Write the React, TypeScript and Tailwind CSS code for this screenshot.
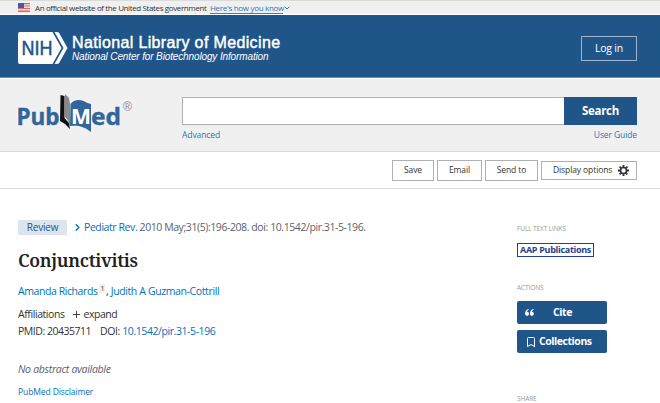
import { Bookmark, ChevronDown, ChevronRight, Plus } from "lucide-react";

function GovBanner() {
  return (
    <div className="flex h-[14px] items-center border-t border-[#dcdcdc] bg-[#f0f0f0] pl-[18px] text-[8px] tracking-[-0.38px]">
      <svg viewBox="0 0 12 9" className="h-[9px] w-3">
        <path fill="#f5e4e4" d="M0 0h12v9H0z" />
        <path fill="#e06666" d="M0 0h12v1.2H0zM0 2.4h12v1.2H0zM0 4.9h12v1.2H0zM0 7.4h12v1.6H0z" />
        <path fill="#4558a5" d="M0 0h6v5H0z" />
      </svg>
      <span className="ml-[5px] w-[172px] whitespace-nowrap">An official website of the United States government</span>
      <a className="ml-[3px] mt-px flex h-[11px] w-[73px] items-center whitespace-nowrap border-b border-[#3583bd] tracking-[-0.3px] text-[#2378bb]">
        Here's how you know
      </a>
      <ChevronDown className="size-[8px] text-[#2378bb]" strokeWidth={3} />
    </div>
  );
}

function NihLogo() {
  return (
    <svg viewBox="0 0 50 32" className="h-8 w-[50px]">
      <path fill="#fff" d="M2 0h32.500l9 16-9 16H2a2 2 0 0 1-2-2V2a2 2 0 0 1 2-2z" />
      <path fill="#fff" d="M36.500 0H39q1.500 0 2.300 1.300L49.500 16l-8.200 14.700Q40.500 32 39 32h-2.500l9-16z" />
      <text x="3.500" y="22.800" fontFamily="Liberation Sans, Arial, sans-serif" fontSize="20" textLength="31" lengthAdjust="spacingAndGlyphs" fill="#20558a" stroke="#20558a" strokeWidth=".5">NIH</text>
    </svg>
  );
}

function PubMedLogo() {
  return (
    <svg viewBox="0 0 116 42" className="h-[42px] w-[116px]">
      <g fontFamily="Open Sans, Noto Sans, sans-serif" fontWeight="700">
        <text x="-1.500" y="31.500" fontSize="24" textLength="43" lengthAdjust="spacingAndGlyphs" fill="#326599" stroke="#326599" strokeWidth=".4">Pub</text>
        <path fill="#111" d="M42.500 2l4 1v22l4.500 5 1 6-5-5-5-3z" />
        <path fill="#888" d="M47 1l4 4 1 6v24l-2-8-3-3z" />
        <path fill="#326599" d="M52.500 11c3-4.500 9-5 13-3 3 1.600 5 2.500 7.500 3v28c-7-6-14-7-21-6z" />
        <text x="53" y="31" fontSize="21" textLength="20" lengthAdjust="spacingAndGlyphs" fill="#fff">M</text>
        <text x="73" y="31.500" fontSize="24" textLength="30" lengthAdjust="spacingAndGlyphs" fill="#326599" stroke="#326599" strokeWidth=".4">ed</text>
      </g>
      <text x="105" y="17.500" fontFamily="Liberation Sans, Arial, sans-serif" fontSize="12" fill="#888">®</text>
    </svg>
  );
}

function GearIcon() {
  return (
    <svg viewBox="0 0 24 24" className="size-[11px] fill-none stroke-current">
      <circle cx="12" cy="12" r="6.500" strokeWidth="3.500" />
      <path strokeWidth="4" d="M12 0v5M12 19v5M0 12h5M19 12h5M3.500 3.500L7 7M17 17l3.500 3.500M3.500 20.500L7 17M17 7l3.500-3.500" />
    </svg>
  );
}

export default function App() {
  return (
    <div className="h-[403px] w-[660px] overflow-hidden bg-white font-['Open_Sans','Noto_Sans',sans-serif] text-[#333]">
      <GovBanner />
      <header className="mt-px flex h-[63px] items-center justify-between border-b border-[#6d91b4] bg-[#20558a] pl-[18px] pr-[23px] text-white">
        <div className="flex items-center gap-1 pt-[3px]">
          <NihLogo />
          <div className="whitespace-nowrap font-['Liberation_Sans',Arial,sans-serif]">
            <div className="mt-px text-[16px] leading-[17px] tracking-[0.36px] [-webkit-text-stroke:0.45px_white]">National Library of Medicine</div>
            <div className="text-[10px] italic leading-[12px] tracking-[-0.13px]">National Center for Biotechnology Information</div>
          </div>
        </div>
        <button className="mt-[5px] h-[25px] w-[56px] border border-[#9bb3cb] text-[10.5px] tracking-[-0.2px]">Log in</button>
      </header>

      <section className="mt-px flex h-[73px] border-b border-[#dcdcdc] bg-[#f0f0f0] pl-[18px] pr-[23px]">
        <div className="mt-[14px] w-[164px]">
          <PubMedLogo />
        </div>
        <div className="mt-[18px] flex-1">
          <div className="flex h-7">
            <div className="flex-1 border border-r-0 border-[#aeb0b5] bg-white" />
            <button className="w-[73px] bg-[#20558a] text-[11.5px] font-bold tracking-[-0.3px] text-white">Search</button>
          </div>
          <div className="mt-[3px] flex justify-between text-[8.5px] leading-[13px] tracking-[-0.1px] text-[#2378bb]">
            <a>Advanced</a>
            <a>User Guide</a>
          </div>
        </div>
      </section>

      <div className="flex h-[37px] items-center justify-end gap-[3px] border-b border-[#dcdcdc] pr-[23px] text-[8.5px] tracking-[-0.1px]">
        <button className="h-[21px] w-[42px] border border-[#aeb0b5]">Save</button>
        <button className="h-[21px] w-[45px] border border-[#aeb0b5]">Email</button>
        <button className="h-[21px] w-[53px] border border-[#aeb0b5]">Send to</button>
        <button className="flex h-[19px] w-[96px] items-center justify-between border border-[#aeb0b5] pl-[11px] pr-[7px]">
          <span className="whitespace-nowrap">Display options</span>
          <GearIcon />
        </button>
      </div>

      <main className="flex pl-[18px]">
        <article className="w-[499px] pt-[31px] text-[10.5px] tracking-[-0.42px]">
          <div className="flex h-[15px] items-center whitespace-nowrap">
            <span className="flex h-[15px] w-[49px] items-center justify-center bg-[#dce4ef] text-[10px] tracking-[-0.2px] text-[#20558a]">Review</span>
            <ChevronRight className="ml-[5px] size-[11px] text-[#0071bc]" strokeWidth={3} />
            <span className="ml-px text-[#5b616b]"><a className="text-[#0071bc]">Pediatr Rev.</a> 2010 May;31(5):196-208. doi: 10.1542/pir.31-5-196.</span>
          </div>
          <h1 className="mt-[13px] whitespace-nowrap font-['Noto_Serif','Liberation_Serif',serif] text-[18px] font-semibold leading-[24px] tracking-[-0.35px] text-[#212121]">Conjunctivitis</h1>
          <div className="mt-[12px] flex h-[15px] items-center whitespace-nowrap text-[#0071bc]">
            <a>Amanda Richards</a>
            <sup className="ml-[2px] mr-px bg-[#f1f1f1] px-px text-[7px] leading-[9px] text-[#333]">1</sup>
            <span className="text-[#333]">,&nbsp;</span>
            <a className="tracking-[-0.38px]">Judith A Guzman-Cottrill</a>
          </div>
          <div className="mt-[8px] flex h-[15px] items-center whitespace-nowrap">
            <span>Affiliations</span>
            <Plus className="ml-[6px] size-[11px]" />
            <span className="ml-[2px] tracking-[-0.5px]">expand</span>
          </div>
          <div className="mt-[2px] flex h-[15px] items-center whitespace-nowrap">
            <span className="tracking-[-0.48px]">PMID: 20435711</span>
            <span className="ml-[9px]">DOI: <a className="text-[#0071bc]">10.1542/pir.31-5-196</a></span>
          </div>
          <p className="mt-[23px] h-[15px] whitespace-nowrap italic leading-[15px] tracking-[-0.3px] text-[#5b616b]">No abstract available</p>
          <a className="mt-[8px] block text-[8.5px] leading-[13px] tracking-[-0.1px] text-[#0071bc]">PubMed Disclaimer</a>
        </article>

        <aside className="w-[91px] whitespace-nowrap pt-[35px]">
          <h3 className="h-[10px] text-[6.5px] leading-[10px] tracking-[-0.1px] text-[#999]">FULL TEXT LINKS</h3>
          <a className="mt-[9px] flex h-[14px] w-[77px] items-center justify-center border border-[#24408e] text-[9px] font-bold tracking-[-0.3px] text-[#24408e]">AAP Publications</a>
          <h3 className="mt-[26px] h-[10px] text-[6.5px] leading-[10px] tracking-[-0.1px] text-[#999]">ACTIONS</h3>
          <button className="mt-[8px] flex h-[23px] w-[90px] items-center rounded-[2px] bg-[#20558a] text-[10.5px] font-bold tracking-[-0.4px] text-white">
            <svg viewBox="0 0 10 8" className="ml-[8px] h-[7px] w-[9px] fill-current">
              <path d="M4 0v1C2.600 1.500 2.100 2.400 2 3.300c1.300-.2 2.400.7 2.400 2.100S3.400 7.800 2.300 7.800C.8 7.800 0 6.700 0 5.100 0 2.400 1.600.6 4 0zM9.500 0v1C8.100 1.500 7.600 2.400 7.500 3.300c1.300-.2 2.400.7 2.400 2.100s-1 2.400-2.100 2.400c-1.500 0-2.300-1.100-2.300-2.700C5.500 2.400 7.100.6 9.500 0z" />
            </svg>
            <span className="ml-[19px]">Cite</span>
          </button>
          <button className="mt-[6px] flex h-[23px] w-[90px] items-center rounded-[2px] bg-[#20558a] text-[10.5px] font-bold tracking-[-0.45px] text-white">
            <Bookmark className="ml-[8px] size-[12px]" strokeWidth={2} />
            <span className="ml-[2px]">Collections</span>
          </button>
          <h3 className="mt-[41px] h-[10px] text-[6.5px] leading-[10px] tracking-[-0.1px] text-[#999]">SHARE</h3>
        </aside>
      </main>
    </div>
  );
}
